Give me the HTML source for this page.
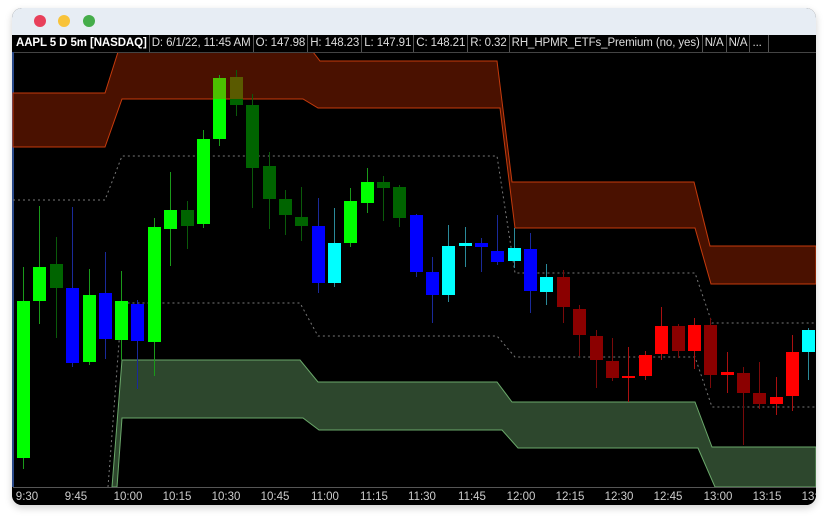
<!DOCTYPE html>
<html><head><meta charset="utf-8"><style>
html,body{margin:0;padding:0;background:#fff;width:828px;height:520px;overflow:hidden}
.win{position:absolute;left:12px;top:8px;width:804px;height:497px;border-radius:10px;background:#000;overflow:hidden;box-shadow:0 3px 8px rgba(0,0,0,.18)}
.tb{position:absolute;left:0;top:0;width:804px;height:27px;background:#e7edf4}
.dot{position:absolute;top:7px;width:12px;height:12px;border-radius:50%}
.hd{position:absolute;left:2px;top:27px;height:17px;width:802px;background:#000;border-bottom:1px solid #444;font:11.5px "Liberation Sans",sans-serif;color:#ddd;white-space:nowrap;display:flex}
.hd span{border-right:1px solid #555;padding:0 2px 0 2px;height:17px;line-height:17px;letter-spacing:-0.1px}
svg{position:absolute;left:0;top:0}
</style></head><body>
<div class="win">
<div class="tb"><div class="dot" style="left:22px;background:#e8405a"></div><div class="dot" style="left:46px;background:#f8c33a"></div><div class="dot" style="left:71px;background:#45ad4a"></div></div>
<svg width="804" height="497" viewBox="12 8 804 497">
<rect x="12" y="52" width="804" height="453" fill="#000"/>
<rect x="12" y="52" width="2" height="435" fill="#2a4a8a"/>
<polygon points="13,93 105,93 118,52 313,52 320,61 497,61 512,182 694,182 710,246 816,246 816,284 711,284 695,228 515,228 500,108 318,108 303,99 122,99 105,147 13,147" fill="#4a1100" stroke="#c53a0c" stroke-width="1"/>
<polygon points="112,487 122,360 300,360 318,382 497,382 512,402 695,402 712,447 816,447 816,487 715,487 698,448 518,448 502,430 319,430 303,418 122,418 117,487" fill="#2d472d" stroke="#6aa86a" stroke-width="1"/>
<g fill="none" stroke="#777" stroke-dasharray="2,3" stroke-width="1">
<polyline points="13,200 105,200 122,156 497,156 515,273 695,273 712,323 816,323"/>
<polyline points="108,487 122,303 300,303 318,336 497,336 515,357 695,357 712,407 816,407"/>
</g>
<g id="c"></g>
<line x1="13" y1="487.5" x2="816" y2="487.5" stroke="#555"/>
<g font-family="Liberation Sans, sans-serif" font-size="11.5" fill="#ccc" text-anchor="middle">
<text x="27" y="500">9:30</text><text x="76" y="500">9:45</text><text x="128" y="500">10:00</text><text x="177" y="500">10:15</text><text x="226" y="500">10:30</text><text x="275" y="500">10:45</text><text x="325" y="500">11:00</text><text x="374" y="500">11:15</text><text x="422" y="500">11:30</text><text x="472" y="500">11:45</text><text x="521" y="500">12:00</text><text x="570" y="500">12:15</text><text x="619" y="500">12:30</text><text x="668" y="500">12:45</text><text x="718" y="500">13:00</text><text x="767" y="500">13:15</text><text x="816" y="500">13:30</text>
</g>
</svg>
<div class="hd">
<span style="font-weight:bold;color:#fff">AAPL 5 D 5m [NASDAQ]</span>
<span>D: 6/1/22, 11:45 AM</span>
<span>O: 147.98</span>
<span>H: 148.23</span>
<span>L: 147.91</span>
<span>C: 148.21</span>
<span>R: 0.32</span>
<span>RH_HPMR_ETFs_Premium (no, yes)</span>
<span>N/A</span>
<span>N/A</span>
<span style="width:14px">...</span>
</div>
</div>
<script>
var G='#00ff00',D='#006400',B='#0000ff',C='#00ffff',R='#ff0000',K='#8b0000';
var W={'#00ff00':'#1a9a1a','#006400':'#0a5a0a','#0000ff':'#1a2a9a','#00ffff':'#2a8a9a','#ff0000':'#aa1010','#8b0000':'#7a0a0a'};
var d=[[17,301,458,267,469,G],[33,267,301,206,324,G],[50,264,288,237,338,D],[66,288,363,207,367,B],[83,295,362,269,365,G],[99,293,339,252,359,B],[115,301,340,271,360,G],[131,304,341,300,389,B],[148,227,342,218,376,G],[164,210,229,172,266,G],[181,210,226,201,249,D],[197,139,224,130,228,G],[213,78,139,75,146,G],[230,77,105,70,116,D],[246,105,168,94,208,D],[263,166,199,152,229,D],[279,199,215,190,235,D],[295,217,226,187,241,D],[312,226,283,198,293,B],[328,243,283,208,287,C],[344,201,243,188,247,G],[361,182,203,168,213,G],[377,182,188,176,221,D],[393,187,218,185,227,D],[410,215,272,214,277,B],[426,272,295,257,323,B],[442,246,295,225,302,C],[459,243,246,227,267,C],[475,243,247,238,272,B],[491,251,262,215,265,B],[508,248,261,228,268,C],[524,249,291,233,313,B],[540,277,292,264,305,C],[557,277,307,270,323,K],[573,309,335,305,356,K],[590,336,360,330,388,K],[606,361,378,338,381,K],[622,376,378,347,402,R],[639,355,376,351,380,R],[655,326,354,307,360,R],[672,326,351,324,358,K],[688,325,351,318,369,R],[704,325,375,318,388,K],[721,372,375,352,393,R],[737,373,393,367,445,K],[753,393,404,362,409,K],[770,397,404,377,415,R],[786,352,396,335,411,R],[802,330,352,328,380,C]];
var s='';d.forEach(function(c){var x=c[0],cx=x+6;s+='<line x1="'+(cx+.5)+'" y1="'+c[3]+'" x2="'+(cx+.5)+'" y2="'+c[4]+'" stroke="'+W[c[5]]+'"/>';s+='<rect x="'+x+'" y="'+c[1]+'" width="13" height="'+Math.max(2,c[2]-c[1])+'" fill="'+c[5]+'"/>';});
s+='<rect x="213" y="78" width="13" height="21" fill="#4cc000"/><rect x="230" y="77" width="13" height="22" fill="#5a5a00"/>';
document.getElementById('c').innerHTML=s;
</script>
</body></html>
